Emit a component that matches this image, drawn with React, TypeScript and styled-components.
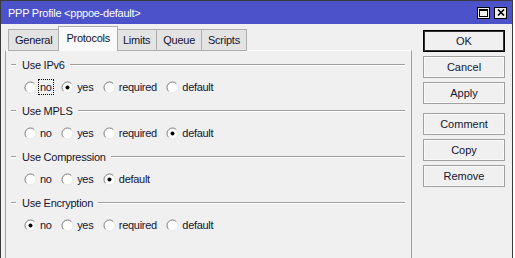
import React from "react";
import styled, { createGlobalStyle } from "styled-components";

const Global = createGlobalStyle`
  html, body { margin: 0; padding: 0; background: #ffffff; }
  body { font-family: "Liberation Sans", Arial, sans-serif; }
`;

const Window = styled.div`
  width: 513px;
  height: 300px;
  box-sizing: border-box;
  border: 1px solid #3a3a3a;
  border-bottom: none;
  background: #f0f0f0;
  display: flex;
  flex-direction: column;
  font-family: "Liberation Sans", Arial, sans-serif;
  font-size: 11px;
  letter-spacing: -0.25px;
  color: #141430;
`;

const TitleBar = styled.div`
  height: 23px;
  flex: none;
  background: #4c52c9;
  color: #ffffff;
  display: flex;
  align-items: center;
  padding: 0 5px 0 7px;
  font-size: 11px;
`;

const TitleText = styled.div`
  flex: 1;
`;

const TitleButtons = styled.div`
  display: flex;
  gap: 4px;
`;

const TitleButton = styled.div`
  width: 13px;
  height: 12px;
  box-sizing: border-box;
  border: 1px solid #000;
  background: #f0f0f0;
  display: flex;
  align-items: center;
  justify-content: center;
`;

const Body = styled.div`
  flex: 1;
  display: flex;
  min-height: 0;
`;

const LeftArea = styled.div`
  width: 411px;
  padding-left: 4px;
  box-sizing: border-box;
  display: flex;
  flex-direction: column;
`;

const Tabs = styled.div`
  display: flex;
  align-items: flex-end;
  margin: 2px 0 -1px 3px;
  height: 25px;
  position: relative;
  z-index: 1;
`;

const Tab = styled.div<{ $active?: boolean }>`
  box-sizing: border-box;
  height: ${(p) => (p.$active ? 25 : 22)}px;
  padding: 0 ${(p) => (p.$active ? 7 : 6)}px ${(p) => (p.$active ? 3 : 0)}px;
  margin: 0 ${(p) => (p.$active ? -1 : 0)}px;
  display: flex;
  align-items: center;
  justify-content: center;
  border: 1px solid #adadad;
  border-bottom: ${(p) => (p.$active ? "none" : "1px solid #adadad")};
  border-left-width: ${(p) => (p.$active ? 1 : 0)}px;
  background: ${(p) => (p.$active ? "#f9f9f9" : "#e3e3e3")};
  position: relative;
  z-index: ${(p) => (p.$active ? 2 : 1)};
  &:first-child {
    border-left-width: 1px;
  }
`;

const Panel = styled.div`
  flex: 1;
  border-top: 1px solid #ffffff;
  border-left: 1px solid #a0a0a0;
  border-right: 1px solid #a0a0a0;
  padding: 7px 6px 0 5px;
  display: flex;
  flex-direction: column;
  gap: 7px;
`;

const Group = styled.div`
  display: flex;
  flex-direction: column;
  gap: 5px;
`;

const GroupHeader = styled.div`
  height: 14px;
  display: flex;
  align-items: center;
  &::before {
    content: "";
    width: 5px;
    height: 0;
    border-top: 1px solid #a0a0a0;
    border-bottom: 1px solid #ffffff;
    margin-right: 6px;
  }
  &::after {
    content: "";
    flex: 1;
    height: 0;
    border-top: 1px solid #a0a0a0;
    border-bottom: 1px solid #ffffff;
    margin-left: 5px;
  }
`;

const RadioRow = styled.div`
  height: 20px;
  display: flex;
  align-items: center;
  padding-left: 13px;
  gap: 9.5px;
`;

const RadioItem = styled.label`
  display: flex;
  align-items: center;
  gap: 3px;
`;

const RadioLabel = styled.span<{ $focus?: boolean }>`
  letter-spacing: -0.3px;
  outline: ${(p) => (p.$focus ? "1px dotted #000" : "none")};
  outline-offset: 1px;
`;

const Buttons = styled.div`
  width: 82px;
  margin: 6px 0 0 11px;
  display: flex;
  flex-direction: column;
  gap: 4px;
`;

const Button = styled.div<{ $default?: boolean; $spaced?: boolean }>`
  height: 22px;
  box-sizing: border-box;
  display: flex;
  align-items: center;
  justify-content: center;
  border: 1px solid ${(p) => (p.$default ? "#000" : "#a0a0a0")};
  box-shadow: inset 0 0 0 1px ${(p) => (p.$default ? "#333" : "#fafafa")};
  background: #f0f0f0;
  letter-spacing: 0;
  margin-top: ${(p) => (p.$spaced ? 5 : 0)}px;
`;

const Radio = ({ checked }: { checked?: boolean }) => (
  <svg width="13" height="13" viewBox="0 0 13 13">
    <circle cx="6.5" cy="6.5" r="5.5" fill="#ffffff" />
    <path d="M10.39 2.61 A5.5 5.5 0 0 0 2.61 10.39" fill="none" stroke="#7a7a7a" strokeWidth="1" />
    <path d="M2.61 10.39 A5.5 5.5 0 0 0 10.39 2.61" fill="none" stroke="#e6e6e6" strokeWidth="1" />
    {checked && <circle cx="6.5" cy="6.5" r="2" fill="#000" />}
  </svg>
);

type Opt = { label: string; checked?: boolean; focus?: boolean };

const groups: { title: string; options: Opt[] }[] = [
  {
    title: "Use IPv6",
    options: [
      { label: "no", focus: true },
      { label: "yes", checked: true },
      { label: "required" },
      { label: "default" },
    ],
  },
  {
    title: "Use MPLS",
    options: [{ label: "no" }, { label: "yes" }, { label: "required" }, { label: "default", checked: true }],
  },
  {
    title: "Use Compression",
    options: [{ label: "no" }, { label: "yes" }, { label: "default", checked: true }],
  },
  {
    title: "Use Encryption",
    options: [{ label: "no", checked: true }, { label: "yes" }, { label: "required" }, { label: "default" }],
  },
];

export default function App() {
  return (
    <>
      <Global />
      <Window>
        <TitleBar>
          <TitleText>PPP Profile &lt;pppoe-default&gt;</TitleText>
          <TitleButtons>
            <TitleButton>
              <svg width="9" height="8" viewBox="0 0 9 8">
                <rect x="0.5" y="0.5" width="8" height="7" fill="none" stroke="#000" />
                <line x1="0" y1="1.5" x2="9" y2="1.5" stroke="#000" />
              </svg>
            </TitleButton>
            <TitleButton>
              <svg width="8" height="7" viewBox="0 0 8 7">
                <path d="M1 0.5 L7 6.5 M7 0.5 L1 6.5" stroke="#000" strokeWidth="1.6" />
              </svg>
            </TitleButton>
          </TitleButtons>
        </TitleBar>
        <Body>
          <LeftArea>
            <Tabs>
              <Tab>General</Tab>
              <Tab $active>Protocols</Tab>
              <Tab>Limits</Tab>
              <Tab>Queue</Tab>
              <Tab>Scripts</Tab>
            </Tabs>
            <Panel>
              {groups.map((g) => (
                <Group key={g.title}>
                  <GroupHeader>{g.title}</GroupHeader>
                  <RadioRow>
                    {g.options.map((o) => (
                      <RadioItem key={o.label}>
                        <Radio checked={o.checked} />
                        <RadioLabel $focus={o.focus}>{o.label}</RadioLabel>
                      </RadioItem>
                    ))}
                  </RadioRow>
                </Group>
              ))}
            </Panel>
          </LeftArea>
          <Buttons>
            <Button $default>OK</Button>
            <Button>Cancel</Button>
            <Button>Apply</Button>
            <Button $spaced>Comment</Button>
            <Button>Copy</Button>
            <Button>Remove</Button>
          </Buttons>
        </Body>
      </Window>
    </>
  );
}
